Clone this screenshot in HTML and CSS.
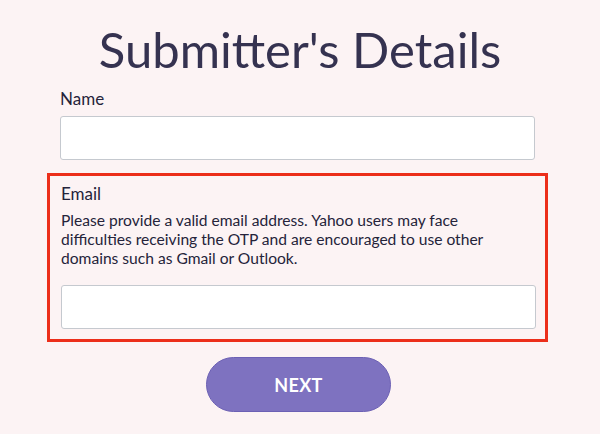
FILE: index.html
```html
<!DOCTYPE html>
<html>
<head>
<meta charset="utf-8">
<link rel="stylesheet" href="styles.css">
</head>
<body>
<div class="page">
  <h1 class="title">Submitter's Details</h1>
  <div class="field">
    <label class="label">Name</label>
    <div class="input"></div>
  </div>
  <div class="highlight">
    <label class="label">Email</label>
    <p class="help">Please provide a valid email address. Yahoo users may face difficulties receiving the OTP and are encouraged to use other domains such as Gmail or Outlook.</p>
    <div class="input"></div>
  </div>
  <div class="actions">
    <button class="next">NEXT</button>
  </div>
</div>
</body>
</html>
```
FILE: styles.css
```css
html, body {
  margin: 0;
  padding: 0;
  background: #fcf3f4;
  font-family: Lato, "Open Sans", sans-serif;
  color: #25233a;
}
.page {
  width: 600px;
  height: 434px;
  overflow: hidden;
  display: flex;
  flex-direction: column;
}
.title {
  margin: 20px 0 0;
  text-align: center;
  font-weight: 400;
  font-size: 49px;
  line-height: 58px;
  color: #353250;
}
.field {
  padding: 10px 0 0 60px;
}
.label {
  display: block;
  font-size: 17px;
  line-height: 22px;
  margin-bottom: 6px;
}
.input {
  width: 473px;
  height: 42px;
  background: #fff;
  border: 1px solid #c5c9cf;
  border-radius: 3px;
}
.highlight {
  margin: 13px 0 0 47px;
  width: 484px;
  padding: 7px 0 10px 11px;
  border: 3px solid #ec2e1a;
}
.help {
  margin: 4px 0 0;
  font-size: 15.6px;
  line-height: 19px;
  width: 470px;
  padding-bottom: 17px;
}
.actions {
  display: flex;
  justify-content: center;
  padding-top: 15px;
  padding-right: 3px;
}
.next {
  width: 185px;
  height: 55px;
  border: 1px solid #6c60b4;
  border-radius: 28px;
  background: #7e72c0;
  color: #fff;
  font-family: Lato, sans-serif;
  font-weight: 700;
  font-size: 18px;
  letter-spacing: 0.3px;
}
```
